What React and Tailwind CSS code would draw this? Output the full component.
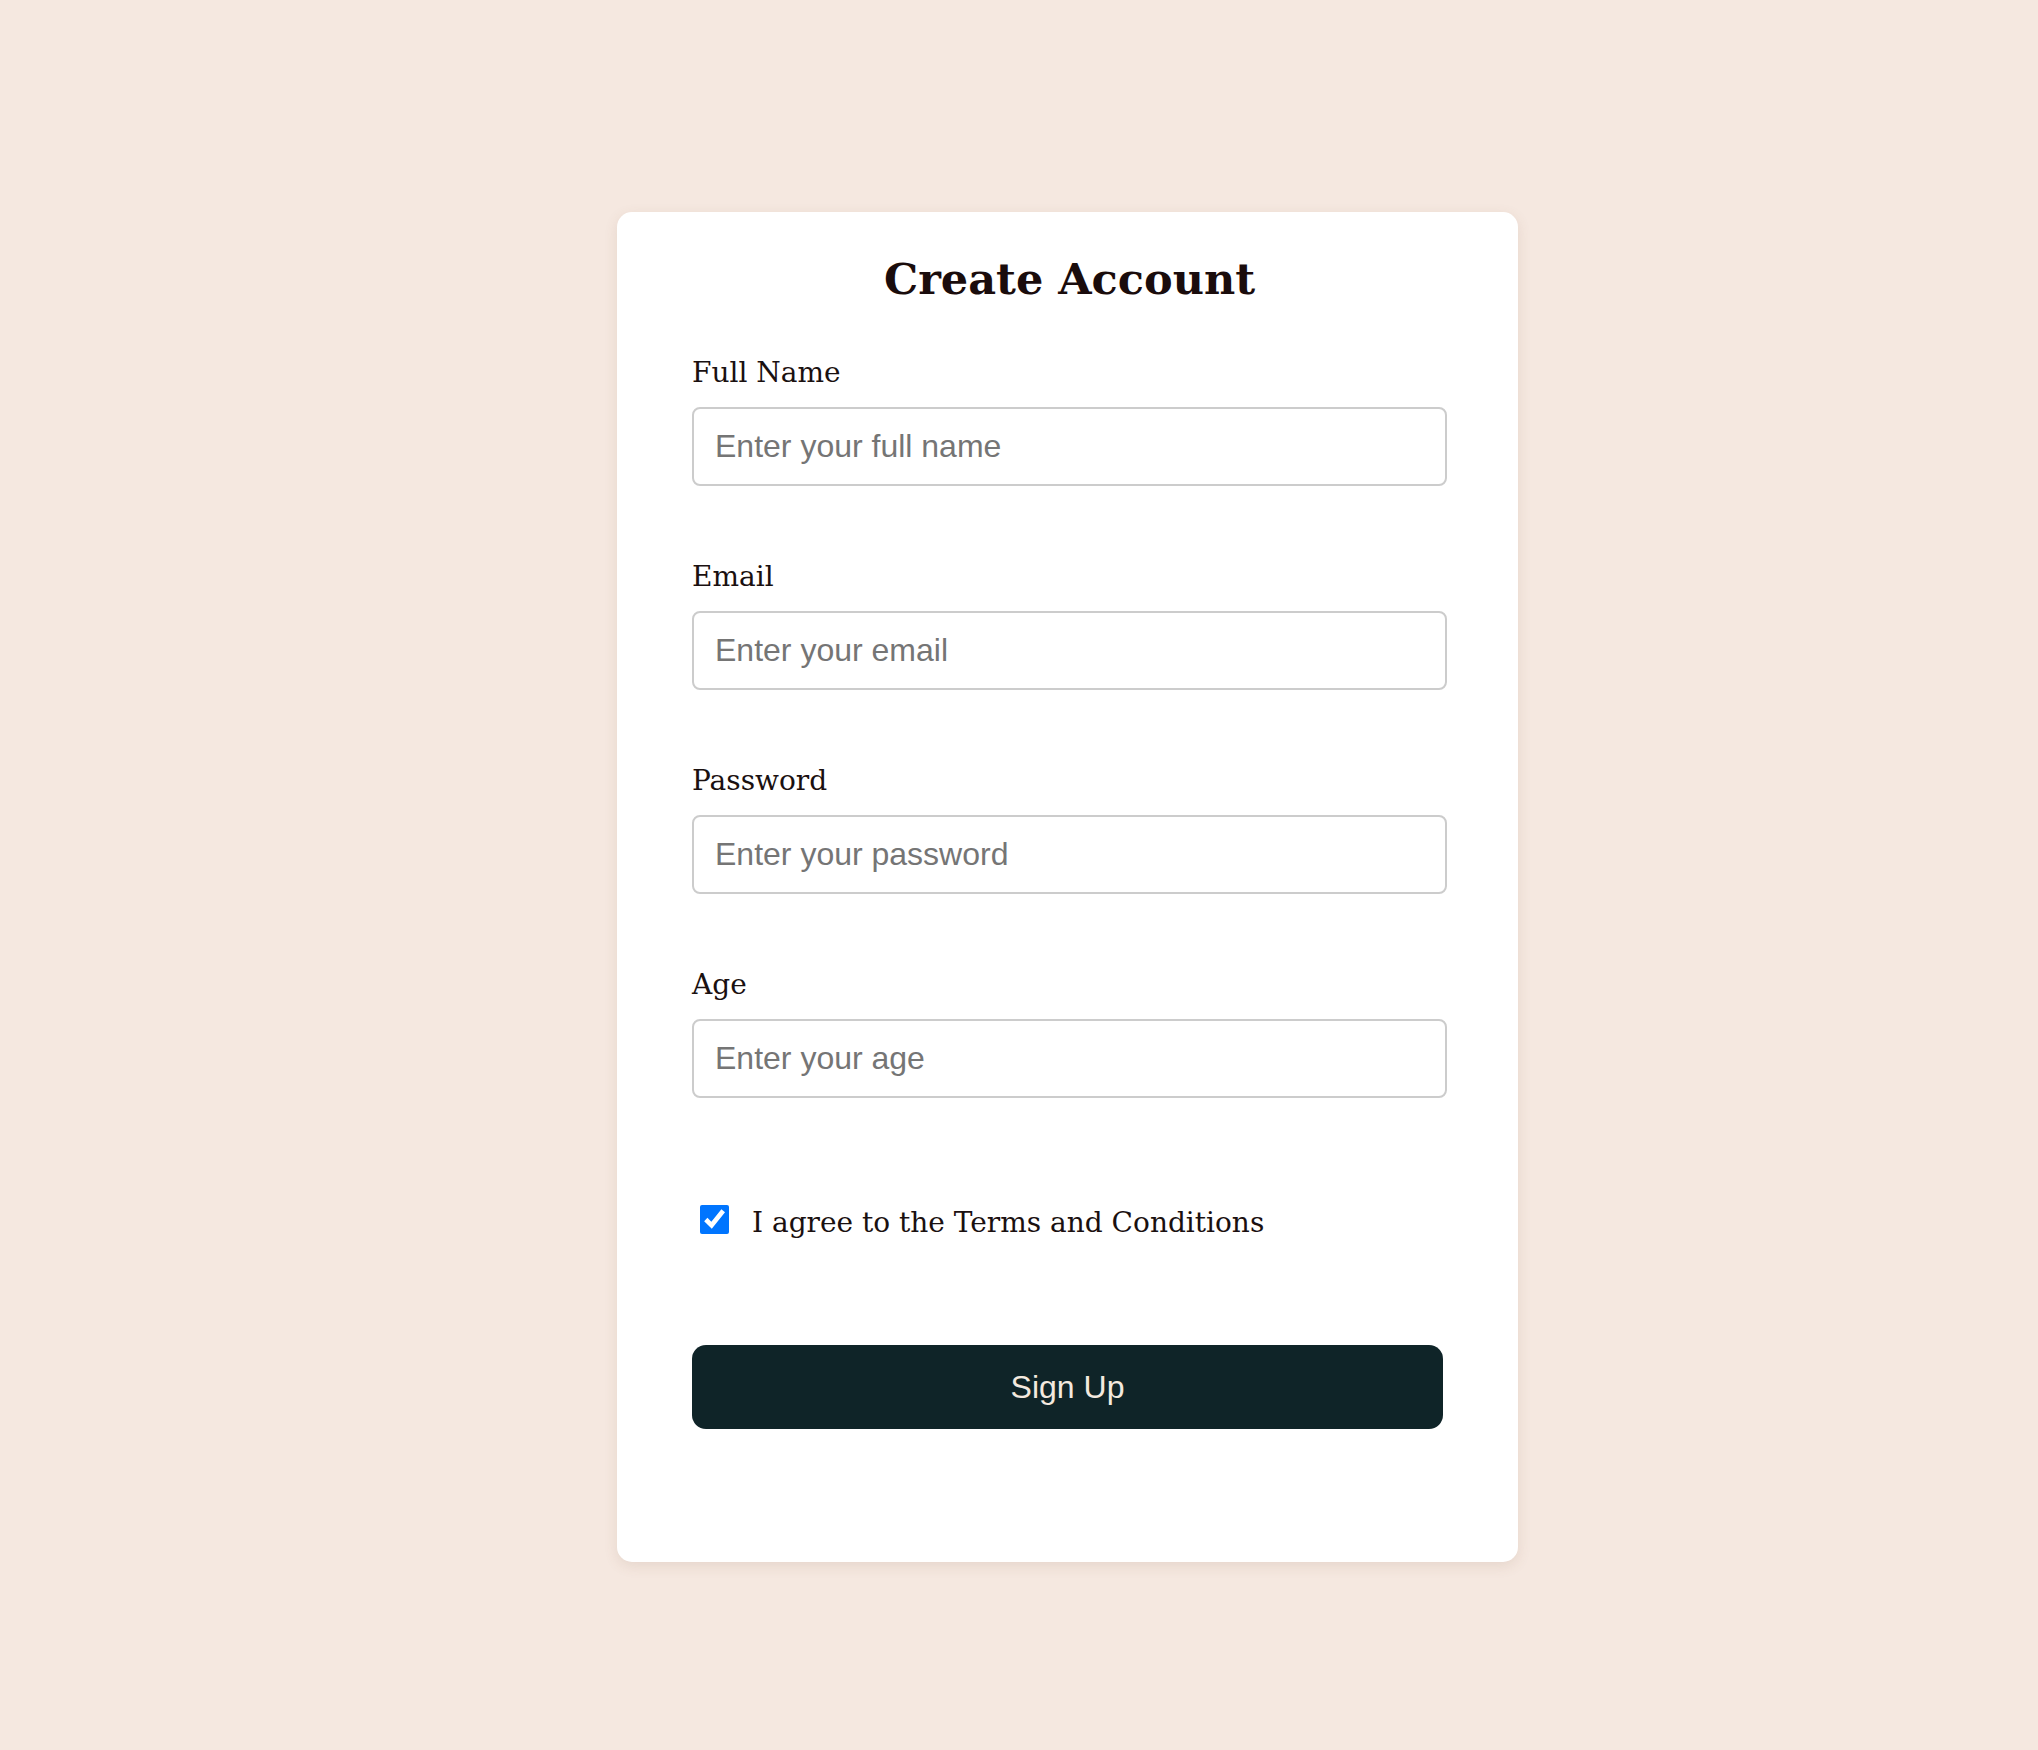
import React from 'react';

const fields = [
  { label: 'Full Name', placeholder: 'Enter your full name', type: 'text' },
  { label: 'Email', placeholder: 'Enter your email', type: 'email' },
  { label: 'Password', placeholder: 'Enter your password', type: 'password' },
  { label: 'Age', placeholder: 'Enter your age', type: 'number' },
];

function Field({ label, placeholder, type }) {
  return (
    <div className="mb-[73px] last:mb-0">
      <label className="mb-[16px] block font-['DejaVu_Serif',serif] text-[28px] leading-[36px] text-[#1a1010]">
        {label}
      </label>
      <input
        type={type}
        placeholder={placeholder}
        className="block h-[79px] w-[755px] rounded-[8px] border-2 border-[#cccccc] bg-white px-[21px] font-['Liberation_Sans',Arial,sans-serif] text-[32px] text-[#222] placeholder:text-[#757575] outline-none"
      />
    </div>
  );
}

export default function App() {
  return (
    <div className="min-h-screen w-full bg-[#f5e8e0] pt-[212px] pb-[188px]">
      <div className="ml-[617px] h-[1350px] w-[901px] rounded-[15px] bg-white pl-[75px] pt-[39px] shadow-[0_4px_14px_rgba(120,80,60,0.12)]">
        <h1 className="mb-[48px] pr-[71px] text-center font-['DejaVu_Serif',serif] text-[43px] font-bold leading-[56px] text-[#1a0c0c]">
          Create Account
        </h1>
        <form onSubmit={(e) => e.preventDefault()}>
          {fields.map((f) => (
            <Field key={f.label} {...f} />
          ))}
          <div className="mt-[107px] flex h-[36px] items-start">
            <input
              type="checkbox"
              defaultChecked
              className="ml-[8px] h-[29px] w-[29px] accent-[#0075ff]"
            />
            <span className="ml-[23px] font-['DejaVu_Serif',serif] text-[28px] leading-[36px] text-[#1a1010]">
              I agree to the Terms and Conditions
            </span>
          </div>
          <button
            type="submit"
            className="mt-[104px] block h-[84px] w-[751px] rounded-[14px] bg-[#0f2428] font-['Liberation_Sans',Arial,sans-serif] text-[32px] text-[#f3e9df]"
          >
            Sign Up
          </button>
        </form>
      </div>
    </div>
  );
}
